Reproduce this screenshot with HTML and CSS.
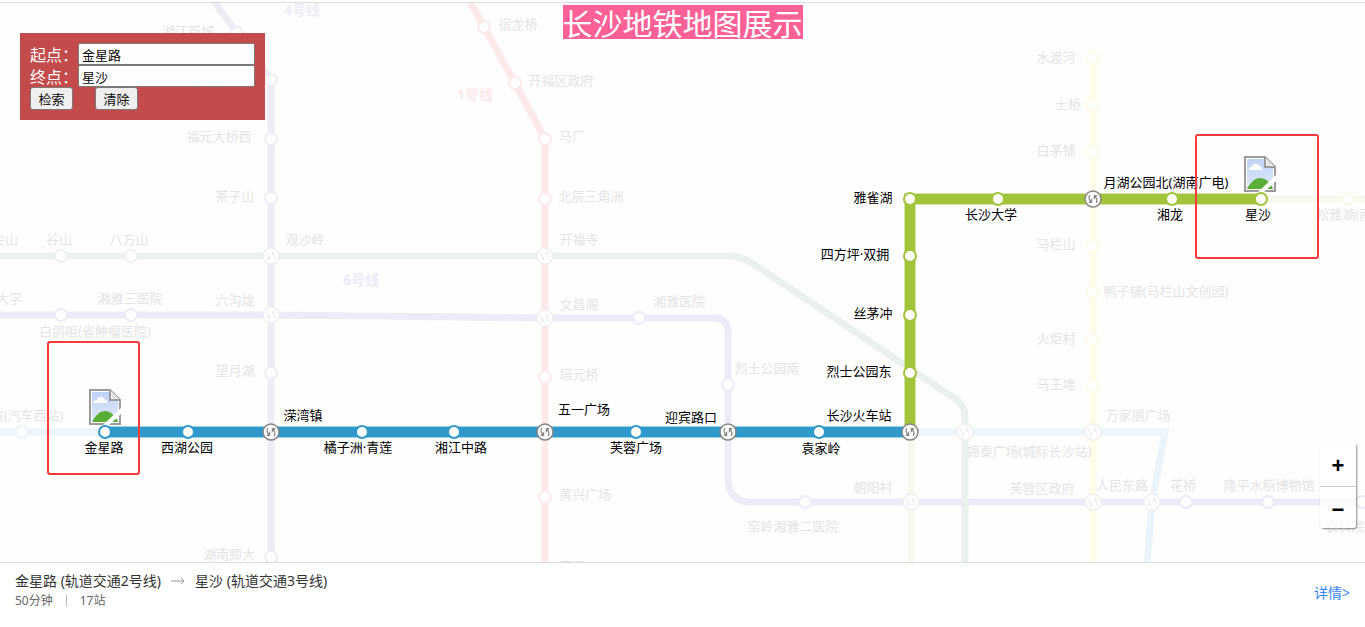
FILE: index.html
```html
<!DOCTYPE html>
<html lang="zh-CN">
<head>
<meta charset="utf-8">
<title>长沙地铁地图展示</title>
<link rel="stylesheet" href="styles.css">
</head>
<body>
<main class="map">
  <svg class="map-canvas" viewBox="0 3 1365 559" preserveAspectRatio="xMidYMid slice" role="img" aria-label="长沙地铁线路图">
    <defs>
      <circle id="stop" r="6"/>
      <g id="transfer">
        <circle class="transfer-ring" r="8"/>
        <path class="transfer-arrow" d="M-3.2-4C-4.4-2-4.2 0-2.6 2M3.2 4C4.4 2 4.2 0 2.6-2"/>
        <path class="transfer-head" d="M-.8-1V4H-4.6ZM.8 1V-4H4.6Z"/>
      </g>
      <linearGradient id="sky" x1="0" y1="0" x2="0" y2="1">
        <stop offset="0" stop-color="#bfd3f5"/>
        <stop offset="1" stop-color="#e0e9fb"/>
      </linearGradient>
      <g id="missing">
        <path d="M1 1H21L31 11V35H1Z" fill="#fff" stroke="#9b9b9b" stroke-width="2"/>
        <path d="M3 3H20V12H29V33H3Z" fill="url(#sky)"/>
        <path d="M3 33C7 25 12 22 16 22C21 22 26 26 29 33Z" fill="#5aad35"/>
        <path d="M5 14C5 11 7 11 8 11C9 7 14 7 15 10C17 10 18 12 18 14Z" fill="#fff"/>
        <path d="M21 1V11H31" fill="#f4f4f4" stroke="#9b9b9b" stroke-width="2"/>
        <path d="M23 4L28 9H23Z" fill="#dedede"/>
        <path d="M33 18V24L19 37H13Z" fill="#fff"/>
      </g>
    </defs>

    <g class="line">
      <path class="l4" d="M213 0L237 33L271 80V565"/>
      <path class="l5" d="M1093 58V565"/>
      <path class="l2" d="M0 432H105M910 432H1165L1152 502L1147 565"/>
      <path class="l3" d="M911 432V565M1261 199H1370"/>
      <path class="l6" d="M0 315H271L545 318H714Q728 318 728 332V478Q728 502 752 502H1370"/>
      <path class="l1" d="M469 0L484 27L515 83L545 139V565"/>
      <path class="lx" d="M0 256H730Q743 256 758 267L951 396Q965 404 965 416V565"/>
    </g>
    <g class="stops">
      <g class="l4"><use href="#stop" x="237" y="33"/><use href="#stop" x="271" y="80"/><use href="#stop" x="271" y="139"/><use href="#stop" x="271" y="198"/><use href="#stop" x="271" y="373"/><use href="#stop" x="271" y="557"/></g>
      <g class="l1"><use href="#stop" x="484" y="27"/><use href="#stop" x="515" y="83"/><use href="#stop" x="545" y="139"/><use href="#stop" x="545" y="199"/><use href="#stop" x="545" y="377"/><use href="#stop" x="545" y="497"/></g>
      <g class="lx"><use href="#stop" x="61" y="256"/><use href="#stop" x="131" y="256"/></g>
      <g class="l6"><use href="#stop" x="61" y="315"/><use href="#stop" x="131" y="315"/><use href="#stop" x="639" y="318"/><use href="#stop" x="728" y="385"/><use href="#stop" x="805" y="502"/><use href="#stop" x="1186" y="502"/><use href="#stop" x="1268" y="502"/><use href="#stop" x="1362" y="502"/></g>
      <g class="l5"><use href="#stop" x="1093" y="58"/><use href="#stop" x="1093" y="105"/><use href="#stop" x="1093" y="152"/><use href="#stop" x="1093" y="246"/><use href="#stop" x="1093" y="292"/><use href="#stop" x="1093" y="339"/><use href="#stop" x="1093" y="386"/></g>
      <g class="l2"><use href="#stop" x="22" y="432"/></g>
      <g class="l3"><use href="#stop" x="1348" y="199"/></g>
    </g>
    <g class="transfers faded">
      <use href="#transfer" x="271" y="256"/><use href="#transfer" x="271" y="315"/><use href="#transfer" x="545" y="256"/><use href="#transfer" x="545" y="318"/><use href="#transfer" x="965" y="432"/><use href="#transfer" x="1093" y="432"/><use href="#transfer" x="911" y="502"/><use href="#transfer" x="1093" y="502"/><use href="#transfer" x="1152" y="502"/>
    </g>
    <g class="names faded">
      <text x="188" y="36">湘江新城</text>
      <text x="219" y="83">汉王陵公园</text>
      <text x="219" y="141">福元大桥西</text>
      <text x="235" y="201">茶子山</text>
      <text x="5" y="244">尖山</text>
      <text x="59" y="244">谷山</text>
      <text x="129" y="244">八方山</text>
      <text x="305" y="244">观沙岭</text>
      <text x="9" y="303">大学</text>
      <text x="130" y="303">湘雅三医院</text>
      <text x="235" y="305">六沟垅</text>
      <text x="95" y="336">白鸽咀(省肿瘤医院)</text>
      <text x="235" y="375">望月湖</text>
      <text x="27" y="420">坡(汽车西站)</text>
      <text x="229" y="559">湖南师大</text>
      <text x="518" y="29">宿龙桥</text>
      <text x="561" y="85">开福区政府</text>
      <text x="572" y="141">马厂</text>
      <text x="591" y="201">北辰三角洲</text>
      <text x="579" y="244">开福寺</text>
      <text x="579" y="309">文昌阁</text>
      <text x="679" y="306">湘雅医院</text>
      <text x="579" y="379">培元桥</text>
      <text x="767" y="373">烈士公园南</text>
      <text x="585" y="499">黄兴广场</text>
      <text x="579" y="571">南门口</text>
      <text x="1056" y="62">水渡河</text>
      <text x="1068" y="109">土桥</text>
      <text x="1056" y="155">白茅铺</text>
      <text x="1056" y="249">马栏山</text>
      <text x="1166" y="296">鸭子铺(马栏山文创园)</text>
      <text x="1056" y="343">火炬村</text>
      <text x="1056" y="389">马王堆</text>
      <text x="1138" y="420">万家丽广场</text>
      <text x="1029" y="456">锦泰广场(城际长沙站)</text>
      <text x="873" y="492">朝阳村</text>
      <text x="1042" y="493">芙蓉区政府</text>
      <text x="1122" y="490">人民东路</text>
      <text x="1183" y="490">花桥</text>
      <text x="1269" y="490">隆平水稻博物馆</text>
      <text x="1345" y="531">农科院</text>
      <text x="793" y="531">窑岭湘雅二医院</text>
      <text x="1344" y="219">松雅湖(南</text>
    </g>
    <g class="line-names">
      <text class="l4" x="302" y="15">4号线</text>
      <text class="l1" x="475" y="100">1号线</text>
      <text class="l6" x="361" y="285">6号线</text>
    </g>

    <path class="route-edge r2" d="M105 432H910"/>
    <path class="route-edge r3" d="M910 432V199H1261"/>
    <path class="route r2" d="M105 432H910"/>
    <path class="route r3" d="M910 432V199H1261"/>
    <use href="#missing" x="89" y="389"/>
    <use href="#missing" x="1244" y="156"/>
    <g class="stops">
      <g class="r2"><use href="#stop" x="105" y="432"/><use href="#stop" x="188" y="432"/><use href="#stop" x="362" y="432"/><use href="#stop" x="454" y="432"/><use href="#stop" x="636" y="432"/><use href="#stop" x="819" y="432"/></g>
      <g class="r3"><use href="#stop" x="910" y="373"/><use href="#stop" x="910" y="315"/><use href="#stop" x="910" y="256"/><use href="#stop" x="910" y="199"/><use href="#stop" x="998" y="199"/><use href="#stop" x="1172" y="199"/><use href="#stop" x="1261" y="199"/></g>
    </g>
    <g class="transfers">
      <use href="#transfer" x="271" y="432"/><use href="#transfer" x="545" y="432"/><use href="#transfer" x="728" y="432"/><use href="#transfer" x="910" y="432"/><use href="#transfer" x="1093" y="199"/>
    </g>
    <g class="names">
      <text x="104" y="452">金星路</text>
      <text x="187" y="452">西湖公园</text>
      <text x="303" y="420">溁湾镇</text>
      <text x="358" y="452">橘子洲·青莲</text>
      <text x="461" y="452">湘江中路</text>
      <text x="584" y="414">五一广场</text>
      <text x="636" y="452">芙蓉广场</text>
      <text x="691" y="422">迎宾路口</text>
      <text x="821" y="453">袁家岭</text>
      <text x="859" y="420">长沙火车站</text>
      <text x="859" y="376">烈士公园东</text>
      <text x="873" y="318">丝茅冲</text>
      <text x="855" y="259">四方坪·双拥</text>
      <text x="873" y="202">雅雀湖</text>
      <text x="991" y="219">长沙大学</text>
      <text x="1166" y="187">月湖公园北(湖南广电)</text>
      <text x="1170" y="219">湘龙</text>
      <text x="1258" y="219">星沙</text>
    </g>
    <g class="frames">
      <rect x="48" y="342" width="91" height="132" rx="2"/>
      <rect x="1196" y="135" width="122" height="123" rx="2"/>
    </g>
  </svg>

  <h1 class="title">长沙地铁地图展示</h1>

  <form class="search">
    <div class="field"><label for="from">起点<span class="colon">：</span></label><input id="from" type="text" value="金星路"></div>
    <div class="field"><label for="to">终点<span class="colon">：</span></label><input id="to" type="text" value="星沙"></div>
    <div class="actions"><button type="button">检索</button><button type="button">清除</button></div>
  </form>

  <div class="zoom">
    <button type="button" aria-label="放大">+</button>
    <button type="button" aria-label="缩小">−</button>
  </div>
</main>

<footer class="summary">
  <div>
    <div class="trip"><span>金星路 (轨道交通2号线)</span><svg class="arrow" viewBox="0 0 14 8" aria-hidden="true"><path d="M0 4H13M10 1L13 4L10 7"/></svg><span>星沙 (轨道交通3号线)</span></div>
    <div class="facts"><span>50分钟</span><span class="divider"></span><span>17站</span></div>
  </div>
  <a class="details" href="#">详情&gt;</a>
</footer>
</body>
</html>
```

FILE: styles.css
```css
* { box-sizing: border-box; }

body {
  margin: 0;
  min-height: 100vh;
  padding-top: 2px;
  display: flex;
  flex-direction: column;
  background: #fff;
  font-family: "Noto Sans", "Noto Sans CJK SC", sans-serif;
}

.map {
  position: relative;
  flex: 1;
  min-height: 400px;
  overflow: hidden;
  border-top: 1px solid #dcdcdc;
  background: #fefefe;
}

.map-canvas {
  position: absolute;
  inset: 0;
  width: 100%;
  height: 100%;
}

.l1 { stroke: #fde9e9; }
.l2 { stroke: #eaf4fa; }
.l3 { stroke: #f6f9eb; }
.l4 { stroke: #efecf5; }
.l5 { stroke: #fffbe9; }
.l6 { stroke: #ecebf8; }
.lx { stroke: #ebf1ed; }
.r2 { stroke: #2f99ca; }
.r3 { stroke: #a1c43b; }

.line path { fill: none; stroke-width: 7; }
.route { fill: none; stroke-width: 10; }
.route-edge { fill: none; stroke-width: 12; opacity: 0.45; }
.stops { fill: #fff; stroke-width: 2; }

.transfers { color: #858585; }
.transfers.faded { color: #efefef; }
.transfer-ring { fill: #fff; stroke: currentColor; stroke-width: 1.5; }
.transfer-arrow { fill: none; stroke: currentColor; stroke-width: 1.2; }
.transfer-head { fill: currentColor; }

.names { font-size: 13px; text-anchor: middle; fill: #000; }
.names.faded { fill: #e4e4e4; }
.line-names { font-size: 14px; font-weight: 700; text-anchor: middle; }
.line-names text { stroke: none; }
.line-names .l1 { fill: #fde9e9; }
.line-names .l4 { fill: #efecf5; }
.line-names .l6 { fill: #ecebf8; }

.frames { fill: none; stroke: #fa3a3a; stroke-width: 2; }

.title {
  position: absolute;
  top: 2px;
  left: 50%;
  transform: translateX(-50%);
  margin: 0;
  font: 400 30px/34px KaiTi, STKaiti, "Noto Sans CJK SC", sans-serif;
  white-space: nowrap;
  color: #fff;
  background: #ff6096;
}

.search {
  position: absolute;
  top: 30px;
  left: 20px;
  width: 245px;
  padding: 10px;
  background: #c24444;
  opacity: 0.96;
  color: #fff;
}

.field { display: flex; align-items: center; height: 22px; }
.field label { flex: none; font-size: 16px; line-height: 22px; }
.colon { font-family: "Noto Sans CJK TC", sans-serif; }
.field input {
  flex: 1;
  min-width: 0;
  height: 22px;
  padding: 0 3px;
  border: 1px solid #767676;
  border-radius: 2px;
  background: #fff;
  color: #000;
  font: 13px "Noto Sans CJK SC", sans-serif;
}

.actions { display: flex; gap: 22px; }
.actions button {
  width: 43px;
  height: 23px;
  padding: 0;
  border: 1px solid #767676;
  border-radius: 3px;
  background: #efefef;
  color: #000;
  font: 13px/20px "Noto Sans CJK SC", sans-serif;
}

.zoom {
  position: absolute;
  right: 9px;
  bottom: 34px;
  width: 36px;
  border-radius: 3px;
  background: rgba(255, 255, 255, 0.8);
  box-shadow: 1px 1px 2px rgba(0, 0, 0, 0.45);
}

.zoom button {
  display: block;
  width: 100%;
  height: 43px;
  padding: 3px 0 0;
  border: 0;
  background: none;
  color: #000;
  font: 700 22px/40px "Liberation Sans", sans-serif;
}

.zoom button + button { height: 42px; padding-top: 5px; border-top: 1px solid #ccc; line-height: 36px; }

.summary {
  display: flex;
  align-items: center;
  justify-content: space-between;
  padding: 8px 15px 16px;
  border-top: 1px solid #dcdcdc;
  background: #fff;
}

.trip {
  display: flex;
  align-items: center;
  gap: 10px;
  font-size: 14px;
  line-height: 20px;
  color: #333;
}

.arrow { width: 14px; height: 8px; fill: none; stroke: #999; }

.facts {
  display: flex;
  align-items: center;
  gap: 13px;
  font-size: 12px;
  line-height: 20px;
  color: #666;
}

.divider { width: 1px; height: 12px; background: #bbb; }

.details {
  padding-top: 4px;
  font-size: 14px;
  line-height: 20px;
  color: #3385ff;
  text-decoration: none;
}
```
